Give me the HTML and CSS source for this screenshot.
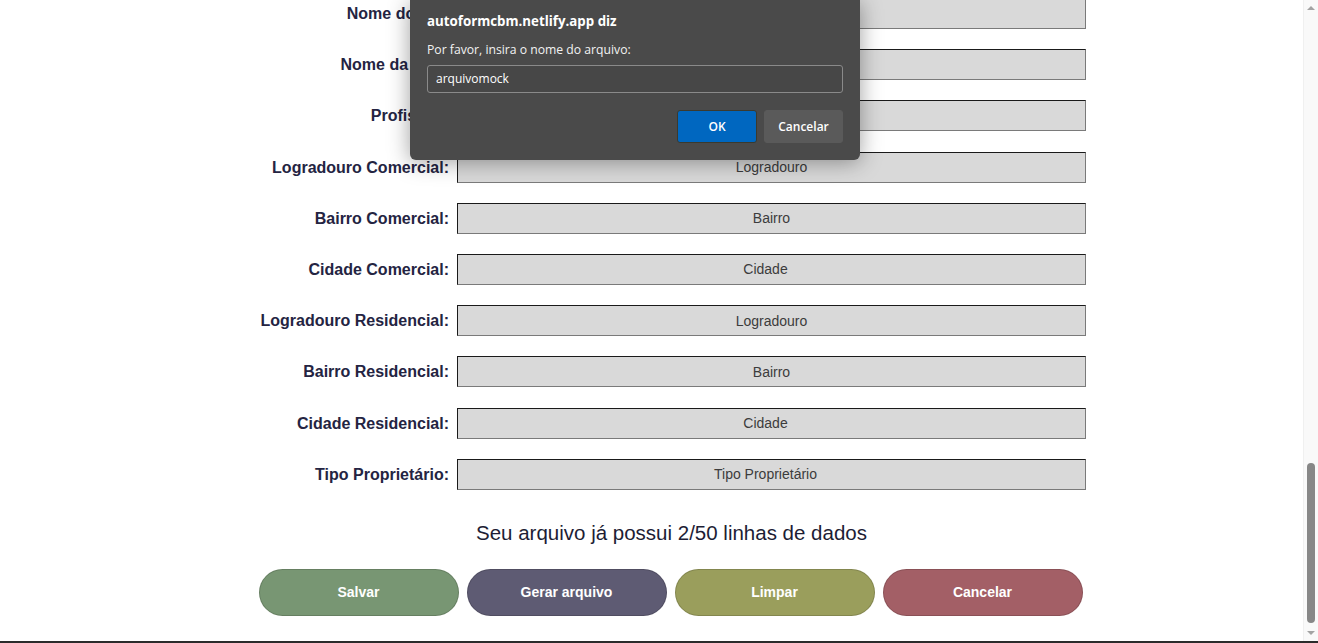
FILE: index.html
```html
<!DOCTYPE html>
<html lang="pt-BR">
<head>
<meta charset="utf-8">
<title>AutoForm CBM</title>
<link rel="stylesheet" href="styles.css">
</head>
<body>
<div class="window">
  <div class="viewport">
    <main class="page">
      <form class="form">
        <label class="lbl">Nome do Pai:</label><input class="field" placeholder="Nome do Pai">
        <label class="lbl">Nome da Mãe:</label><input class="field" placeholder="Nome da Mãe">
        <label class="lbl">Profissão:</label><input class="field" placeholder="Profissão">
        <label class="lbl">Logradouro Comercial:</label><input class="field" placeholder="Logradouro">
        <label class="lbl">Bairro Comercial:</label><input class="field" placeholder="Bairro">
        <label class="lbl">Cidade Comercial:</label><input class="field shift" placeholder="Cidade">
        <label class="lbl">Logradouro Residencial:</label><input class="field" placeholder="Logradouro">
        <label class="lbl">Bairro Residencial:</label><input class="field" placeholder="Bairro">
        <label class="lbl">Cidade Residencial:</label><input class="field shift" placeholder="Cidade">
        <label class="lbl">Tipo Proprietário:</label><input class="field shift" placeholder="Tipo Proprietário">
      </form>
      <p class="status">Seu arquivo já possui 2/50 linhas de dados</p>
      <div class="actions">
        <button class="btn btn-save" type="button">Salvar</button>
        <button class="btn btn-gen" type="button">Gerar arquivo</button>
        <button class="btn btn-clear" type="button">Limpar</button>
        <button class="btn btn-cancel" type="button">Cancelar</button>
      </div>
    </main>
    <div class="scrollbar">
      <div class="arrow arrow-up"></div>
      <div class="track"><div class="thumb"></div></div>
      <div class="arrow arrow-down"></div>
    </div>
  </div>
  <div class="bottom-edge"></div>
</div>

<div class="dialog" role="dialog">
  <div class="dlg-title">autoformcbm.netlify.app diz</div>
  <div class="dlg-msg">Por favor, insira o nome do arquivo:</div>
  <div class="dlg-input">arquivomock</div>
  <div class="dlg-buttons">
    <button class="dlg-btn dlg-ok" type="button">OK</button>
    <button class="dlg-btn dlg-cancel" type="button">Cancelar</button>
  </div>
</div>
</body>
</html>
```

FILE: styles.css
```css
* { box-sizing: border-box; }
html, body {
  margin: 0;
  padding: 0;
  height: 100%;
  overflow: hidden;
  background: #ffffff;
  font-family: "Liberation Sans", Arial, sans-serif;
}
.window {
  display: flex;
  flex-direction: column;
  height: 643px;
}
.viewport {
  flex: 1;
  display: flex;
  min-height: 0;
}
.page {
  flex: 1;
  overflow: hidden;
  padding-left: 257px;
}
.form {
  margin: -2px 0 0 0;
  width: 829px;
  display: grid;
  grid-template-columns: 192px 629px;
  column-gap: 8px;
  row-gap: 20.2px;
  align-items: center;
}
.lbl {
  text-align: right;
  font-weight: bold;
  font-size: 16px;
  line-height: 20px;
  padding-top: 1px;
  color: #242442;
  white-space: nowrap;
}
.field {
  height: 31px;
  width: 629px;
  background: #d9d9d9;
  border-style: solid;
  border-width: 1px;
  border-color: #1a1a1a #7a7a7a #7a7a7a #1a1a1a;
  font-family: "Liberation Sans", Arial, sans-serif;
  font-size: 14px;
  text-align: center;
  color: #3c3c3c;
  padding: 0;
}
.field::placeholder { color: #3c3c3c; opacity: 1; }
.field.shift { padding-right: 12px; }
.status {
  width: 829px;
  margin: 31px 0 0 0;
  text-align: center;
  font-size: 20.5px;
  line-height: 24px;
  color: #1d1d35;
}
.actions {
  width: 829px;
  margin-top: 24px;
  padding-right: 2px;
  display: flex;
  justify-content: center;
  gap: 8px;
}
.btn {
  width: 200px;
  height: 47px;
  border-radius: 24px;
  border: 1px solid rgba(0,0,0,0.15);
  color: #ffffff;
  font-family: "Liberation Sans", Arial, sans-serif;
  font-weight: bold;
  font-size: 14px;
  padding: 0;
}
.btn-save { background: #789673; }
.btn-gen { background: #5e5b73; }
.btn-clear { background: #9a9e5c; }
.btn-cancel { background: #a35f66; }

.scrollbar {
  width: 15px;
  background: #f9f9f9;
  border-left: 1px solid #f0f0f0;
  display: flex;
  flex-direction: column;
  align-items: center;
}
.arrow {
  width: 0;
  height: 0;
  border-left: 4px solid transparent;
  border-right: 4px solid transparent;
  margin: 6px 0;
}
.arrow-up { border-bottom: 4px solid #a3a3a3; }
.arrow-down { border-top: 4px solid #a3a3a3; }
.track {
  flex: 1;
  width: 100%;
  display: flex;
  flex-direction: column;
  justify-content: flex-end;
  align-items: center;
  padding-bottom: 2px;
}
.thumb {
  width: 8px;
  height: 160px;
  background: #878787;
  border-radius: 4px;
}
.bottom-edge {
  height: 2px;
  background: #2b2b2b;
}

.dialog {
  position: absolute;
  left: 410px;
  top: 0;
  width: 450px;
  height: 160px;
  background: #4a4a4a;
  border-radius: 0 0 6px 6px;
  box-shadow: 0 2px 22px rgba(0,0,0,0.38);
  padding: 11px 17px 0 17px;
  color: #ffffff;
  font-family: "Open Sans", "Noto Sans", sans-serif;
  font-size: 12.2px;
}
.dlg-title {
  font-weight: bold;
  font-size: 13.3px;
  line-height: 20px;
}
.dlg-msg {
  margin-top: 9px;
  line-height: 20px;
  color: #f2f2f2;
}
.dlg-input {
  margin-top: 5px;
  height: 28px;
  border: 1px solid #8a8a8a;
  border-radius: 3px;
  background: #474747;
  padding-left: 8px;
  line-height: 26px;
  font-size: 12px;
}
.dlg-buttons {
  margin-top: 17px;
  display: flex;
  justify-content: flex-end;
  gap: 7px;
}
.dlg-btn {
  height: 33px;
  width: 80px;
  border-radius: 3px;
  color: #ffffff;
  font-family: "Open Sans", "Noto Sans", sans-serif;
  font-size: 12px;
  font-weight: 600;
  padding: 0;
}
.dlg-ok {
  background: #0067c0;
  border: 1px solid #3b3a2e;
}
.dlg-cancel {
  background: #5a5a5a;
  border: 1px solid #5a5a5a;
  width: 79px;
}
```
